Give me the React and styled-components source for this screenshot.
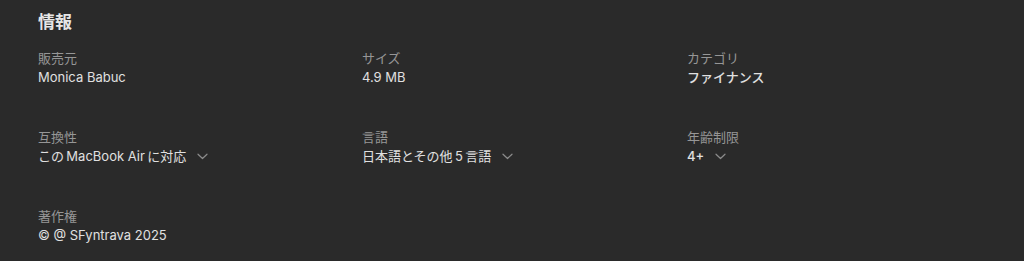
import React from "react";
import styled, { createGlobalStyle } from "styled-components";

const Global = createGlobalStyle`
  html, body { margin: 0; padding: 0; background: #2a2a2a; }
  body { font-family: Inter, "Noto Sans CJK JP", sans-serif; -webkit-font-smoothing: antialiased; }
`;

const Page = styled.section`
  width: 1024px;
  height: 261px;
  box-sizing: border-box;
  padding: 11px 0 0 38px;
  background: #2a2a2a;
  overflow: hidden;
`;

const Title = styled.h2`
  margin: 0;
  font-size: 17px;
  line-height: 22px;
  font-weight: 700;
  color: #e6e6e6;
`;

const Grid = styled.div`
  display: grid;
  grid-template-columns: 324px 325px 300px;
  row-gap: 43px;
  margin-top: 17px;
`;

const Item = styled.div`
  display: flex;
  flex-direction: column;
  gap: 2px;
`;

const Label = styled.div`
  font-size: 13px;
  line-height: 16px;
  color: #969696;
`;

const Value = styled.div`
  display: flex;
  align-items: center;
  gap: 11px;
  font-size: 13px;
  line-height: 18px;
  color: #e0e0e0;
  font-weight: ${(p) => (p.$strong ? 500 : 400)};
`;

const Chevron = () => (
  <svg width="11" height="7" viewBox="0 0 11 7" fill="none">
    <path d="M1 1.2 L5.5 5.5 L10 1.2" stroke="#8c8c8c" strokeWidth="1.2" strokeLinecap="round" strokeLinejoin="round" />
  </svg>
);

const items = [
  { label: "販売元", value: "Monica Babuc" },
  { label: "サイズ", value: "4.9 MB" },
  { label: "カテゴリ", value: "ファイナンス", strong: true },
  { label: "互換性", value: "この\u2009MacBook Air\u2009に対応", more: true },
  { label: "言語", value: "日本語とその他\u20095\u2009言語", more: true },
  { label: "年齢制限", value: "4+", more: true, strong: true },
  { label: "著作権", value: "© @ SFyntrava 2025" },
];

export default function App() {
  return (
    <>
      <Global />
      <Page>
        <Title>情報</Title>
        <Grid>
          {items.map((it) => (
            <Item key={it.label}>
              <Label>{it.label}</Label>
              <Value $strong={it.strong}>
                <span>{it.value}</span>
                {it.more && <Chevron />}
              </Value>
            </Item>
          ))}
        </Grid>
      </Page>
    </>
  );
}
